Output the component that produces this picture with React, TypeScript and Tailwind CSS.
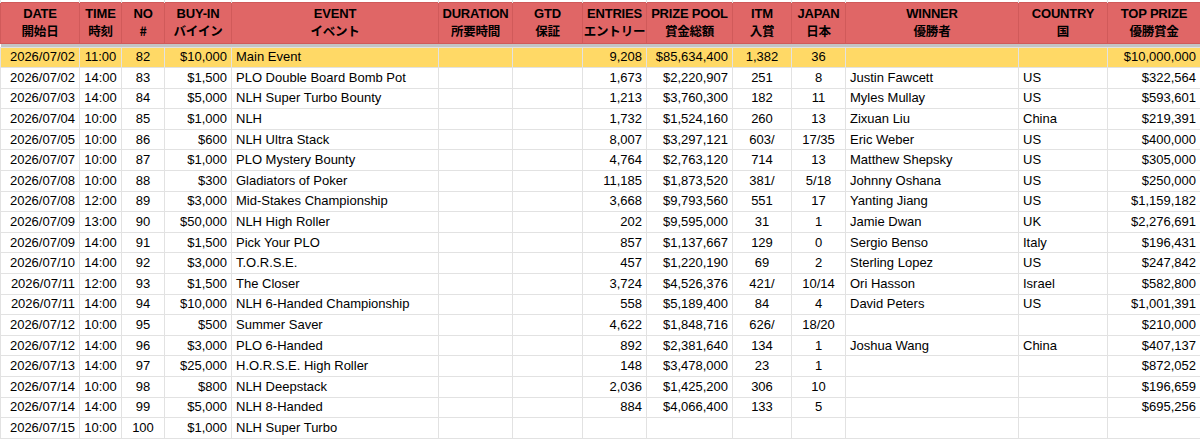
const cols = [
  { en: "DATE", jp: "開始日", w: 79, a: "text-right" },
  { en: "TIME", jp: "時刻", w: 42, a: "text-center" },
  { en: "NO", jp: "#", w: 43, a: "text-center" },
  { en: "BUY-IN", jp: "バイイン", w: 67, a: "text-right" },
  { en: "EVENT", jp: "イベント", w: 207, a: "text-left" },
  { en: "DURATION", jp: "所要時間", w: 74, a: "text-left" },
  { en: "GTD", jp: "保証", w: 70, a: "text-right" },
  { en: "ENTRIES", jp: "エントリー", w: 64, a: "text-right" },
  { en: "PRIZE POOL", jp: "賞金総額", w: 86, a: "text-right" },
  { en: "ITM", jp: "入賞", w: 59, a: "text-center" },
  { en: "JAPAN", jp: "日本", w: 54, a: "text-center" },
  { en: "WINNER", jp: "優勝者", w: 173, a: "text-left" },
  { en: "COUNTRY", jp: "国", w: 89, a: "text-left" },
  { en: "TOP PRIZE", jp: "優勝賞金", w: 93, a: "text-right" },
];

const rows: string[][] = [
  ["2026/07/02", "11:00", "82", "$10,000", "Main Event", "", "", "9,208", "$85,634,400", "1,382", "36", "", "", "$10,000,000"],
  ["2026/07/02", "14:00", "83", "$1,500", "PLO Double Board Bomb Pot", "", "", "1,673", "$2,220,907", "251", "8", "Justin Fawcett", "US", "$322,564"],
  ["2026/07/03", "14:00", "84", "$5,000", "NLH Super Turbo Bounty", "", "", "1,213", "$3,760,300", "182", "11", "Myles Mullay", "US", "$593,601"],
  ["2026/07/04", "10:00", "85", "$1,000", "NLH", "", "", "1,732", "$1,524,160", "260", "13", "Zixuan Liu", "China", "$219,391"],
  ["2026/07/05", "10:00", "86", "$600", "NLH Ultra Stack", "", "", "8,007", "$3,297,121", "603/", "17/35", "Eric Weber", "US", "$400,000"],
  ["2026/07/07", "10:00", "87", "$1,000", "PLO Mystery Bounty", "", "", "4,764", "$2,763,120", "714", "13", "Matthew Shepsky", "US", "$305,000"],
  ["2026/07/08", "10:00", "88", "$300", "Gladiators of Poker", "", "", "11,185", "$1,873,520", "381/", "5/18", "Johnny Oshana", "US", "$250,000"],
  ["2026/07/08", "12:00", "89", "$3,000", "Mid-Stakes Championship", "", "", "3,668", "$9,793,560", "551", "17", "Yanting Jiang", "US", "$1,159,182"],
  ["2026/07/09", "13:00", "90", "$50,000", "NLH High Roller", "", "", "202", "$9,595,000", "31", "1", "Jamie Dwan", "UK", "$2,276,691"],
  ["2026/07/09", "14:00", "91", "$1,500", "Pick Your PLO", "", "", "857", "$1,137,667", "129", "0", "Sergio Benso", "Italy", "$196,431"],
  ["2026/07/10", "14:00", "92", "$3,000", "T.O.R.S.E.", "", "", "457", "$1,220,190", "69", "2", "Sterling Lopez", "US", "$247,842"],
  ["2026/07/11", "12:00", "93", "$1,500", "The Closer", "", "", "3,724", "$4,526,376", "421/", "10/14", "Ori Hasson", "Israel", "$582,800"],
  ["2026/07/11", "14:00", "94", "$10,000", "NLH 6-Handed Championship", "", "", "558", "$5,189,400", "84", "4", "David Peters", "US", "$1,001,391"],
  ["2026/07/12", "10:00", "95", "$500", "Summer Saver", "", "", "4,622", "$1,848,716", "626/", "18/20", "", "", "$210,000"],
  ["2026/07/12", "14:00", "96", "$3,000", "PLO 6-Handed", "", "", "892", "$2,381,640", "134", "1", "Joshua Wang", "China", "$407,137"],
  ["2026/07/13", "14:00", "97", "$25,000", "H.O.R.S.E. High Roller", "", "", "148", "$3,478,000", "23", "1", "", "", "$872,052"],
  ["2026/07/14", "10:00", "98", "$800", "NLH Deepstack", "", "", "2,036", "$1,425,200", "306", "10", "", "", "$196,659"],
  ["2026/07/14", "14:00", "99", "$5,000", "NLH 8-Handed", "", "", "884", "$4,066,400", "133", "5", "", "", "$695,256"],
  ["2026/07/15", "10:00", "100", "$1,000", "NLH Super Turbo", "", "", "", "", "", "", "", "", ""],
];

export default function App() {
  return (
    <div className="w-[1200px] h-[443px] overflow-hidden bg-white text-black font-[family-name:Liberation_Sans,Arial,sans-serif]">
      <table className="table-fixed border-collapse w-[1200px]">
        <colgroup>
          {cols.map((c) => (
            <col key={c.en} style={{ width: c.w }} />
          ))}
        </colgroup>
        <thead>
          <tr className="h-[2px]">
            {cols.map((c) => (
              <td key={c.en} className="border-x border-[#e2e2e2] p-0" />
            ))}
          </tr>
          <tr className="h-[41px] bg-[#e06666]">
            {cols.map((c) => (
              <th key={c.en} className="border border-[#d05a5a] p-0 text-center align-middle text-[13px] font-bold leading-[16px] whitespace-nowrap overflow-hidden tracking-[-0.2px]">
                <div>{c.en}</div>
                <div className="font-[family-name:Noto_Sans_CJK_JP,sans-serif] text-[12.5px] leading-[17px]">{c.jp}</div>
              </th>
            ))}
          </tr>
          <tr className="h-[4px] bg-[#c4c4c4]">
            {cols.map((c) => (
              <td key={c.en} className="p-0" />
            ))}
          </tr>
        </thead>
        <tbody>
          {rows.map((r, i) => (
            <tr key={i} className={`h-[20.6px] ${i === 0 ? "bg-[#ffd966]" : "bg-white"}`}>
              {r.map((v, j) => (
                <td
                  key={j}
                  className={`border border-[#e2e2e2] px-[4px] py-0 text-[13px] leading-[18px] whitespace-nowrap overflow-hidden ${cols[j].a}`}
                >
                  {v}
                </td>
              ))}
            </tr>
          ))}
        </tbody>
      </table>
    </div>
  );
}
